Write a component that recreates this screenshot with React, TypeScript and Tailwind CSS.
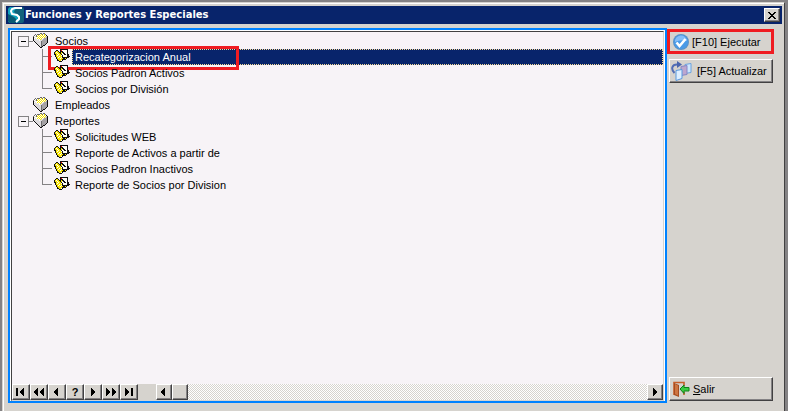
import React, { useState } from 'react';

type TreeNode = {
  label: string;
  open?: boolean;
  children?: string[];
};

const TREE: TreeNode[] = [
  {
    label: 'Socios',
    open: true,
    children: ['Recategorizacion Anual', 'Socios Padron Activos', 'Socios por División'],
  },
  { label: 'Empleados' },
  {
    label: 'Reportes',
    open: true,
    children: [
      'Solicitudes WEB',
      'Reporte de Activos a partir de',
      'Socios Padron Inactivos',
      'Reporte de Socios por Division',
    ],
  },
];

const HIGHLIGHTED = 'Recategorizacion Anual';

const RAISED =
  'border border-t-white border-l-white border-r-[#424142] border-b-[#424142] bg-[#d6d3ce] shadow-[inset_-1px_-1px_0_#848284]';

// 16x16 tree icons, one letter per pixel
const PALETTE: Record<string, string> = {
  K: '#101010',
  D: '#6b696b',
  W: '#fffff7',
  L: '#dedbde',
  Y: '#f7e300',
  G: '#a5a2a5',
  R: '#ff0000',
};

const FOLDER = [
  '.......DD.DD....',
  '..D.DDDWYDWYD...',
  '.DWDWYWYWYWYWK..',
  'DWLDYWYWYWYWYLK.',
  'KLWWWYWYWYWYLGK.',
  'KWLWYWYWYWLGGGK.',
  'KLLLWLWYLLGGGGK.',
  'KLLLLLWLLGGGGGK.',
  '.KLLLLLLDGGGGGK.',
  '..KLLLLLDGGGGGK.',
  '...KLLLLDGGGGK..',
  '....KLLLDGGGK...',
  '.....KLLDGKK....',
  '......KLDK......',
  '.......KK.......',
];

const REPORT = [
  '......KKKKKKKK..',
  '..KK..KRWWWWWK..',
  '.KYYK.KKKWWWWK..',
  'KYWYYKKYKKWWWK..',
  'KYYWYYKYWKKWWK..',
  'KKYYWYYKWWKKWKK.',
  '.KYWYYYWKWWWWKK.',
  '.KYYYWYYKWWWWKKK',
  '..KYWYYWKKKKKKK.',
  '..KYYYWYYKKYK...',
  '...KYYYYKKKK....',
  '...KKYYWK.......',
  '.....KKK........',
];

const PixelIcon: React.FC<{ rows: string[] }> = ({ rows }) => (
  <svg width="16" height="16" viewBox="0 0 16 16" shapeRendering="crispEdges" className="shrink-0">
    {rows.map((row, y) =>
      row.split('').map((c, x) => (c === '.' ? null : <rect key={`${x}-${y}`} x={x} y={y} width="1" height="1" fill={PALETTE[c]} />)),
    )}
  </svg>
);

const LogoIcon = () => (
  <svg width="16" height="16" viewBox="0 0 16 16" className="shrink-0">
    <rect width="16" height="16" rx="2" fill="#10617b" />
    <path d="M2 0h12v2H8L6 4l1 3 5 2v4l-3 3H2L0 14V2z" fill="#10a2bd" />
    <path d="M0 7l6 3 2 2v4H2l-2-2z" fill="#085973" />
    <path d="M14 1H7L4 2 3 4l1 3 5 1 2 2v2l-3 3" fill="none" stroke="#fff" strokeWidth="2" />
  </svg>
);

const CheckIcon = () => (
  <svg width="20" height="20" viewBox="-2 -2 20 20" className="shrink-0">
    <circle cx="8" cy="8" r="8" fill="#5a92c6" />
    <circle cx="8" cy="8" r="7" fill="#4a9ae7" />
    <path d="M2 8a6 6 0 0 1 12-1Q8 5 2 8z" fill="#84bef7" />
    <path d="m3.500 8.500 3 3.500 6-7" fill="none" stroke="#fff" strokeWidth="2.600" />
  </svg>
);

const RefreshIcon = () => (
  <svg width="25" height="20" viewBox="0 0 25 20" className="shrink-0">
    <path d="m14 3.500 6-1v9l-6 1z" fill="#cee7ff" stroke="#6ba2de" />
    <path d="m10 5.500 6-1v9l-6 1z" fill="#bda6ce" stroke="#8486c6" />
    <path d="m5 9.500 6-1v9l-6 2z" fill="#deefff" stroke="#5a9ade" />
    <path d="M3.500 12C-.5 8 1 3.500 6 3.500" fill="none" stroke="#526db5" strokeWidth="2" />
    <path d="m6 0 5 3.500L6 7z" fill="#4a65ad" />
  </svg>
);

const ExitIcon = () => (
  <svg width="21" height="20" viewBox="-2 -2 21 20" className="shrink-0">
    <path d="M1 14V1.500h10V5M11 11v3" fill="none" stroke="#c65d29" strokeWidth="1.600" />
    <path d="m1 2 5 2v12l-5-2z" fill="#a54d21" />
    <path d="m2 3 3 1.500v10L2 13z" fill="#ce7542" />
    <path d="m7 8 4-4v2.500h5v3.500h-5v2.500z" fill="#39cb42" stroke="#108218" />
  </svg>
);

const NAV = [
  { name: 'Primero', path: 'M1 1h2v8H1zM9 1v8H8V8H7V7H6V6H5V4h1V3h1V2h1V1z' },
  { name: 'Página anterior', path: 'M5 1v8H4V8H3V7H2V6H1V4h1V3h1V2h1V1zM11 1v8h-1V8H9V7H8V6H7V4h1V3h1V2h1V1z' },
  { name: 'Anterior', path: 'M7 1v8H6V8H5V7H4V6H3V4h1V3h1V2h1V1z' },
  { name: 'Ayuda', path: '' },
  { name: 'Siguiente', path: 'M4 1v8h1V8h1V7h1V6h1V4H7V3H6V2H5V1z' },
  { name: 'Página siguiente', path: 'M1 1v8h1V8h1V7h1V6h1V4H4V3H3V2H2V1zM7 1v8h1V8h1V7h1V6h1V4h-1V3H9V2H8V1z' },
  { name: 'Último', path: 'M8 1h2v8H8zM2 1v8h1V8h1V7h1V6h1V4H5V3H4V2H3V1z' },
];

const Glyph: React.FC<{ path: string }> = ({ path }) => (
  <svg width="12" height="10" viewBox="0 0 12 10" shapeRendering="crispEdges" className="shrink-0">
    <path d={path} fill="#000" />
  </svg>
);

type ActionButtonProps = {
  icon: React.ReactNode;
  marked?: boolean;
  children: React.ReactNode;
};

const ActionButton: React.FC<ActionButtonProps> = ({ icon, marked, children }) => (
  <button type="button" className={`relative flex h-6 w-full items-center gap-px pl-px whitespace-nowrap ${RAISED}`}>
    {icon}
    <span>{children}</span>
    {marked && <span className="pointer-events-none absolute -top-[2px] -right-[2px] -bottom-px -left-[3px] border-3 border-[#ef1c21]" />}
  </button>
);

const App: React.FC = () => {
  const [selected, setSelected] = useState(HIGHLIGHTED);
  const [nodes, setNodes] = useState(TREE);

  const toggle = (label: string) => {
    setNodes(nodes.map((n) => (n.label === label ? { ...n, open: !n.open } : n)));
  };

  return (
    <div className="flex min-h-screen bg-[#848284] pt-[2px] pr-[3px] pl-[2px] font-['Liberation_Sans',Arial,sans-serif] text-[11px] leading-4 text-black">
      <div className="flex flex-1 flex-col border-t border-r border-l border-t-[#d6d3ce] border-r-[#424142] border-l-[#d6d3ce] bg-[#d6d3ce]">
        <div className="flex flex-1 flex-col border-t border-l border-white px-[2px] pt-[2px]">
          <header className="flex h-[18px] items-center bg-[#08246b] px-[2px] text-white">
            <LogoIcon />
            <h1 className="flex-1 pl-px font-['DejaVu_Sans',Verdana,sans-serif] text-[10px] font-bold">
              Funciones y Reportes Especiales
            </h1>
            <button type="button" aria-label="Cerrar" className={`flex h-[14px] w-4 items-center justify-center ${RAISED}`}>
              <svg width="8" height="7" viewBox="0 0 8 7" shapeRendering="crispEdges">
                <path d="M0 0h2v1h1v1h2V1h1V0h2v1H7v1H6v1H5v1h1v1h1v1h1v1H6V6H5V5H3v1H2v1H0V6h1V5h1V4h1V3H2V2H1V1H0z" fill="#000" />
              </svg>
            </button>
          </header>

          <main className="flex flex-1 pt-1 pr-[9px] pb-2 pl-[2px]">
            <section className="flex flex-1 flex-col border-2 border-[#0082ff] bg-white px-px pt-px">
              <div className="flex flex-1 flex-col border border-t-[#424142] border-r-[#d6d3ce] border-b-[#d6d3ce] border-l-[#424142] bg-[#f7f3f7]">
                <ul className="flex-1 pt-px pl-[6px]">
                  {nodes.map((node) => (
                    <li key={node.label}>
                      <div className="flex h-4 items-center">
                        <div className="flex w-[15px] items-center">
                          {node.children && (
                            <>
                              <button
                                type="button"
                                aria-label={node.label}
                                aria-expanded={node.open}
                                onClick={() => toggle(node.label)}
                                className="flex h-[11px] w-[11px] items-center justify-center border border-[#848284]"
                              >
                                <span className="h-px w-[5px] bg-black" />
                              </button>
                              <span className="h-px w-1 bg-[#848284]" />
                            </>
                          )}
                        </div>
                        <PixelIcon rows={FOLDER} />
                        <span className="pl-[6px]">{node.label}</span>
                      </div>
                      {node.open && node.children && (
                        <ul>
                          {node.children.map((label, i) => (
                            <li key={label} className="relative flex h-4 pl-6">
                              <span className="flex w-[10px] flex-col">
                                <span className="h-2 border-b border-l border-[#848284]" />
                                {i < node.children!.length - 1 && <span className="h-2 border-l border-[#848284]" />}
                              </span>
                              <span className="w-[2px]" />
                              <PixelIcon rows={REPORT} />
                              <span className="w-[2px]" />
                              <button
                                type="button"
                                onClick={() => setSelected(label)}
                                className={`flex-1 border border-dotted pl-[2px] text-left leading-[14px] ${
                                  selected === label ? 'border-[#f7db94] bg-[#08246b] text-white' : 'border-transparent'
                                }`}
                              >
                                {label}
                              </button>
                              {label === HIGHLIGHTED && (
                                <span className="pointer-events-none absolute -top-[3px] left-[30px] h-6 w-[191px] border-3 border-[#ef1c21]" />
                              )}
                            </li>
                          ))}
                        </ul>
                      )}
                    </li>
                  ))}
                </ul>

                <div className="flex h-4 bg-[#d6d3ce]">
                  {NAV.map((item) => (
                    <button
                      key={item.name}
                      type="button"
                      aria-label={item.name}
                      className={`flex w-[18px] items-center justify-center ${RAISED}`}
                    >
                      {item.path ? <Glyph path={item.path} /> : <b className="leading-3">?</b>}
                    </button>
                  ))}
                  <div className="ml-[18px] flex flex-1 bg-[repeating-conic-gradient(#fff_0_25%,#d6d3ce_0_50%)] bg-[length:2px_2px]">
                    <button type="button" aria-label="Desplazar a la izquierda" className={`flex w-4 items-center justify-center ${RAISED}`}>
                      <Glyph path={NAV[2].path} />
                    </button>
                    <div className={`w-4 ${RAISED}`} />
                    <div className="flex-1" />
                    <button type="button" aria-label="Desplazar a la derecha" className={`flex w-4 items-center justify-center ${RAISED}`}>
                      <Glyph path={NAV[4].path} />
                    </button>
                  </div>
                </div>
              </div>
            </section>

            <aside className="flex w-[106px] flex-col gap-[5px] pt-[2px] pb-[2px] pl-[2px]">
              <ActionButton icon={<CheckIcon />} marked>
                [F10] Ejecutar
              </ActionButton>
              <ActionButton icon={<RefreshIcon />}>[F5] Actualizar</ActionButton>
              <div className="flex-1" />
              <ActionButton icon={<ExitIcon />}>
                <u>S</u>alir
              </ActionButton>
            </aside>
          </main>
        </div>
      </div>
    </div>
  );
};

export default App;
